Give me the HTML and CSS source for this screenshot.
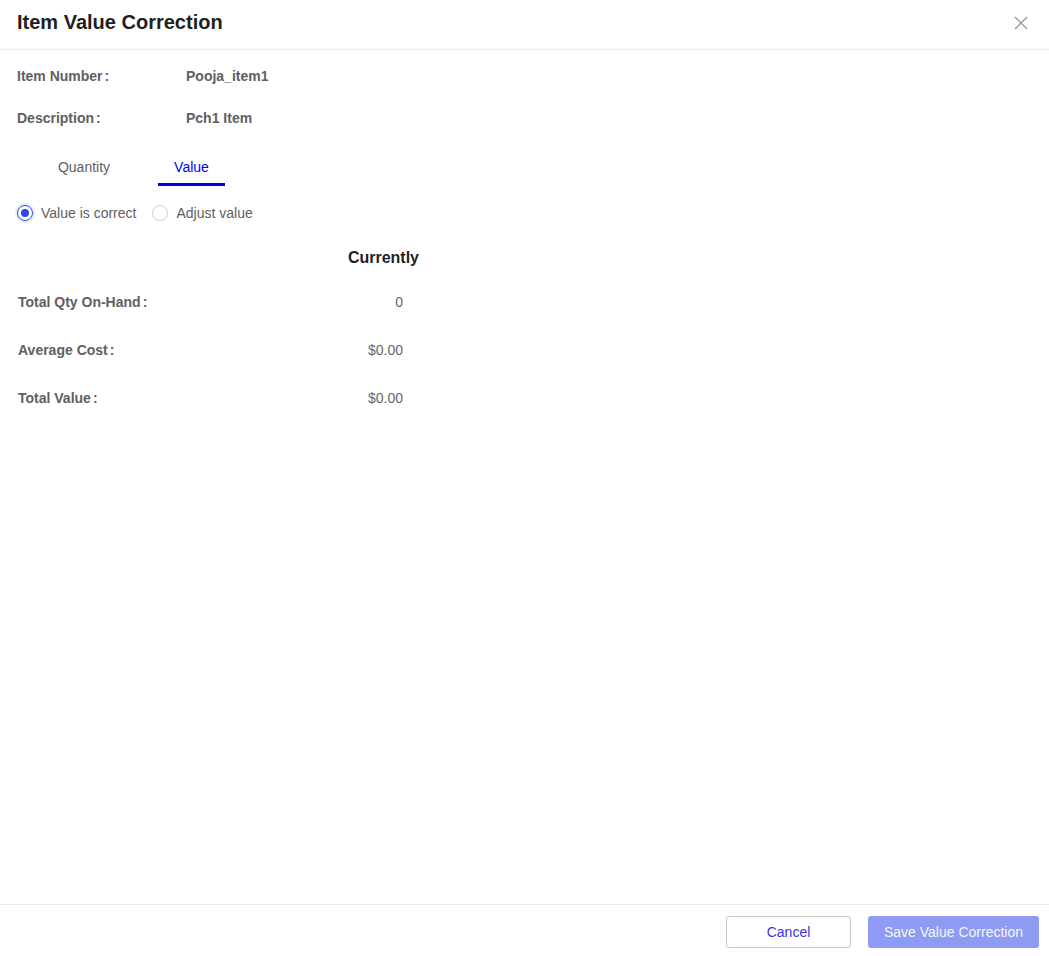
FILE: index.html
```html
<!DOCTYPE html>
<html>
<head>
    <title>Item Value Correction</title>
    <link rel="stylesheet" href="styles.css">
</head>
<body>
<div class="dialog">
    <div class="dialog-header">
        <h1>Item Value Correction</h1>
        <span class="close">
            <svg width="14" height="14" viewBox="0 0 14 14"><path d="M1 1L13 13M13 1L1 13" stroke="#9a9a9a" stroke-width="1.3" fill="none"/></svg>
        </span>
    </div>

    <div class="dialog-body">
        <div class="info-row">
            <div class="info-label">Item Number<span class="colon">:</span></div>
            <div class="info-value">Pooja_item1</div>
        </div>
        <div class="info-row">
            <div class="info-label">Description<span class="colon">:</span></div>
            <div class="info-value">Pch1 Item</div>
        </div>

        <div class="tabs">
            <div class="tab">Quantity</div>
            <div class="tab active">Value</div>
        </div>

        <div class="radios">
            <label class="radio checked"><span class="radio-dot"></span>Value is correct</label>
            <label class="radio"><span class="radio-dot"></span>Adjust value</label>
        </div>

        <div class="summary">
            <div class="summary-head">Currently</div>
            <div class="summary-row">
                <div class="summary-label">Total Qty On-Hand<span class="colon">:</span></div>
                <div class="summary-value">0</div>
            </div>
            <div class="summary-row">
                <div class="summary-label">Average Cost<span class="colon">:</span></div>
                <div class="summary-value">$0.00</div>
            </div>
            <div class="summary-row">
                <div class="summary-label">Total Value<span class="colon">:</span></div>
                <div class="summary-value">$0.00</div>
            </div>
        </div>
    </div>

    <div class="dialog-footer">
        <button class="btn btn-cancel">Cancel</button>
        <button class="btn btn-save">Save Value Correction</button>
    </div>
</div>
</body>
</html>
```

FILE: styles.css
```css
html, body {
    margin: 0;
    padding: 0;
    height: 100%;
}
body {
    font-family: "Liberation Sans", Arial, sans-serif;
    background: #fff;
    color: #606266;
}
.dialog {
    display: flex;
    flex-direction: column;
    height: 956px;
}
.dialog-header {
    height: 49px;
    flex-shrink: 0;
    border-bottom: 1px solid #ebebeb;
    display: flex;
    align-items: center;
    justify-content: space-between;
    padding: 0 21px 0 17px;
}
.dialog-header h1 {
    margin: 0;
    font-size: 20px;
    font-weight: bold;
    color: #1f1f1f;
    position: relative;
    top: -2px;
}
.close {
    display: flex;
    position: relative;
    top: -2px;
}
.dialog-body {
    flex: 1;
    padding: 16px 17px 0 17px;
}
.info-row {
    display: flex;
    font-size: 14px;
    font-weight: bold;
    color: #606060;
    height: 42px;
    line-height: 20px;
}
.info-label {
    width: 169px;
}
.colon {
    margin-left: 2px;
}
.tabs {
    display: flex;
    margin-top: 2px;
    margin-left: 24px;
}
.tab {
    font-size: 14px;
    color: #606060;
    padding: 7px 0 8px;
    border-bottom: 3px solid transparent;
    text-align: center;
}
.tab:first-child {
    width: 86px;
    margin-right: 31px;
}
.tab.active {
    width: 67px;
    color: #0000ee;
    border-bottom-color: #0000e6;
}
.radios {
    display: flex;
    align-items: center;
    margin-top: 19px;
    font-size: 14px;
    color: #606060;
}
.radio {
    display: flex;
    align-items: center;
    margin-right: 16px;
}
.radio-dot {
    width: 14px;
    height: 14px;
    border: 1px solid #cfcfcf;
    border-radius: 50%;
    margin-right: 8px;
    box-sizing: content-box;
    position: relative;
}
.radio.checked .radio-dot {
    border-color: #2b49e6;
    box-shadow: 0 0 0 2px #e6e9fb;
}
.radio.checked .radio-dot::after {
    content: "";
    position: absolute;
    left: 3px;
    top: 3px;
    width: 8px;
    height: 8px;
    border-radius: 50%;
    background: #2b49e6;
}
.summary {
    width: 386px;
    margin-top: 28px;
}
.summary-head {
    font-size: 16px;
    font-weight: bold;
    color: #1f1f1f;
    text-align: right;
    margin-right: -16px;
    margin-bottom: 26px;
}
.summary-row {
    display: flex;
    justify-content: space-between;
    height: 48px;
    font-size: 14px;
    line-height: 18px;
    padding-left: 1px;
}
.summary-label {
    font-weight: bold;
    color: #606060;
}
.summary-value {
    color: #666;
}
.dialog-footer {
    flex-shrink: 0;
    border-top: 1px solid #ebebeb;
    height: 40px;
    display: flex;
    justify-content: flex-end;
    align-items: flex-start;
    padding: 11px 10px 0 0;
    gap: 17px;
}
.btn {
    font-family: "Liberation Sans", Arial, sans-serif;
    font-size: 14px;
    height: 32px;
    border-radius: 3px;
    cursor: pointer;
}
.btn-cancel {
    width: 125px;
    background: #fff;
    border: 1px solid #c8c8c8;
    color: #3b34e0;
}
.btn-save {
    width: 171px;
    background: #8d9bf2;
    border: none;
    color: #f4f6ff;
}
```
